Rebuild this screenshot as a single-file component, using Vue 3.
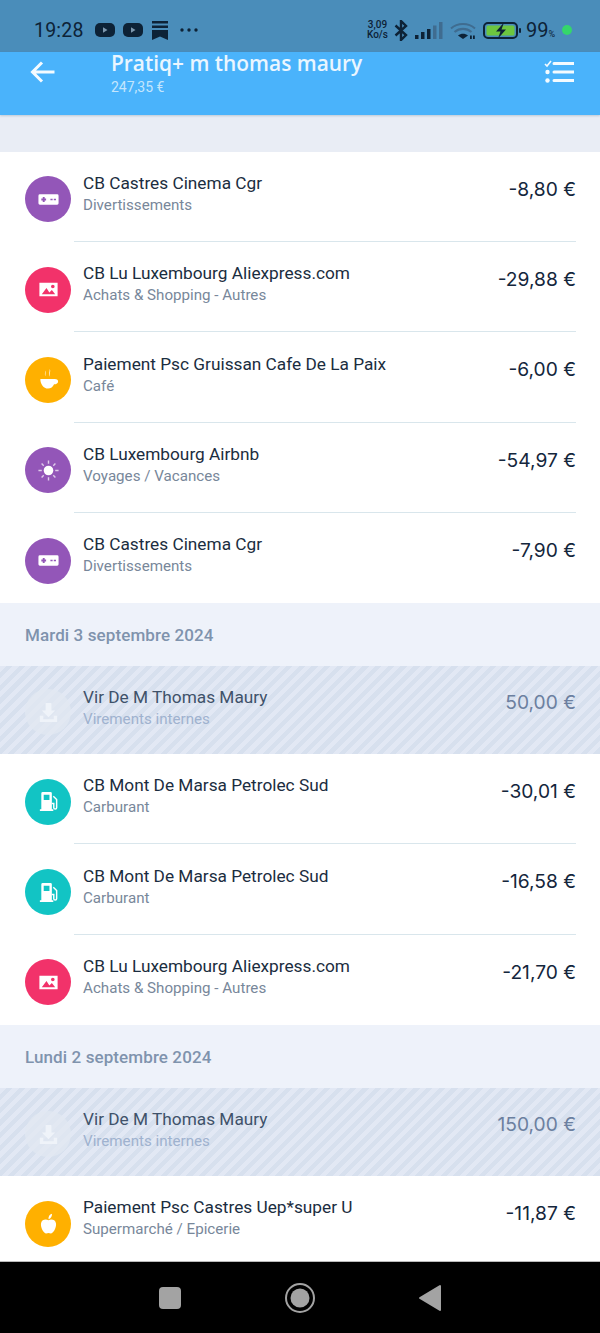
<script setup>
const icons = {
  game: '#9356b8',
  image: '#f2326a',
  cup: '#ffb000',
  sun: '#9356b8',
  fuel: '#12c4c4',
  apple: '#ffb000',
}
const sections = [
  { rows: [
    { t: 'CB Castres Cinema Cgr', s: 'Divertissements', a: '-8,80 €', i: 'game' },
    { t: 'CB Lu Luxembourg Aliexpress.com', s: 'Achats & Shopping - Autres', a: '-29,88 €', i: 'image' },
    { t: 'Paiement Psc Gruissan Cafe De La Paix', s: 'Café', a: '-6,00 €', i: 'cup' },
    { t: 'CB Luxembourg Airbnb', s: 'Voyages / Vacances', a: '-54,97 €', i: 'sun' },
    { t: 'CB Castres Cinema Cgr', s: 'Divertissements', a: '-7,90 €', i: 'game' },
  ] },
  { date: 'Mardi 3 septembre 2024', rows: [
    { t: 'Vir De M Thomas Maury', s: 'Virements internes', a: '50,00 €', i: 'down', internal: true },
    { t: 'CB Mont De Marsa Petrolec Sud', s: 'Carburant', a: '-30,01 €', i: 'fuel' },
    { t: 'CB Mont De Marsa Petrolec Sud', s: 'Carburant', a: '-16,58 €', i: 'fuel' },
    { t: 'CB Lu Luxembourg Aliexpress.com', s: 'Achats & Shopping - Autres', a: '-21,70 €', i: 'image' },
  ] },
  { date: 'Lundi 2 septembre 2024', rows: [
    { t: 'Vir De M Thomas Maury', s: 'Virements internes', a: '150,00 €', i: 'down', internal: true },
    { t: 'Paiement Psc Castres Uep*super U', s: 'Supermarché / Epicerie', a: '-11,87 €', i: 'apple' },
  ] },
]
</script>

<template>
  <div class="screen">
    <div class="status">
      <span class="clock">19:28</span>
      <div class="status-left">
        <svg width="20" height="14" viewBox="0 0 20 14"><rect width="20" height="14" rx="5" fill="#0d2236"/><path d="M8 4.300v5.400l4.500-2.700z" fill="#7d97ad"/></svg>
        <svg width="20" height="14" viewBox="0 0 20 14"><rect width="20" height="14" rx="5" fill="#0d2236"/><path d="M8 4.300v5.400l4.500-2.700z" fill="#7d97ad"/></svg>
        <svg width="18" height="19" viewBox="0 0 18 19"><path d="M1 0h16v2.600H1zM1 4.500h16v2.500H1zM1 9h16v10l-8-3.600L1 19z" fill="#0d2236"/></svg>
        <svg class="more" width="18" height="4" viewBox="0 0 18 4"><circle cx="2" cy="2" r="1.700" fill="#0d2236"/><circle cx="9" cy="2" r="1.700" fill="#0d2236"/><circle cx="16" cy="2" r="1.700" fill="#0d2236"/></svg>
      </div>
      <div class="status-right">
        <span class="speed">3,09<br>Ko/s</span>
        <svg class="bt" width="14" height="21" viewBox="0 0 14 21"><path d="M1.500 5.500l10.500 9.500-5 5V1l5 5-10.500 9.500" fill="none" stroke="#0d2236" stroke-width="2.400"/></svg>
        <svg class="signal" width="28" height="17" viewBox="0 0 28 17"><rect x="0" y="13" width="3.500" height="4" fill="#0d2236"/><rect x="6" y="10" width="3.500" height="7" fill="#0d2236"/><rect x="12" y="7" width="3.500" height="10" fill="#0d2236"/><rect x="18" y="3.500" width="3.500" height="13.500" fill="#3f6c90"/><rect x="24" y="0" width="3.500" height="17" fill="#3f6c90"/></svg>
        <svg class="wifi" width="26" height="17" viewBox="0 0 26 17"><path d="M1 6.500C7.500.6 18.500.6 25 6.500" fill="none" stroke="#3f6c90" stroke-width="2"/><path d="M4.500 10c5-4.300 12-4.300 17 0" fill="none" stroke="#3f6c90" stroke-width="2.200"/><path d="M8 13.500c3-2.300 7-2.300 10 0l-5 3.500z" fill="#0d2236"/><rect x="20" y="13.500" width="1.800" height="3.500" fill="#0d2236"/><rect x="23" y="13.500" width="1.800" height="3.500" fill="#0d2236"/></svg>
        <svg class="batt" width="38" height="17" viewBox="0 0 38 17"><rect x="1" y="1" width="33" height="15" rx="4" fill="none" stroke="#0d2236" stroke-width="2"/><rect x="3.500" y="3.500" width="28" height="10" rx="1.500" fill="#6cc63f"/><path d="M21 .5l-8 9h4.500l-2.500 7 8-9h-4.500z" fill="#0d2236"/><rect x="36" y="6" width="2" height="5" rx="1" fill="#0d2236"/></svg>
        <span class="battery">99<small>%</small></span>
        <i class="dot"></i>
      </div>
    </div>

    <header class="bar">
      <svg class="back" width="26" height="24" viewBox="0 0 26 24"><path d="M24.500 12H2.500M12 2.500L2.500 12l9.500 9.500" fill="none" stroke="#f4fbff" stroke-width="3"/></svg>
      <div class="bar-text">
        <div class="bar-title">Pratiq+ m thomas maury</div>
        <div class="bar-sub">247,35 €</div>
      </div>
      <svg class="menu" width="30" height="24" viewBox="0 0 30 24"><path d="M1 4l2 2 4-5" fill="none" stroke="#f4fbff" stroke-width="1.600"/><path d="M10 3.500h19.500M10 12h19.500M10 20.500h19.500" stroke="#f4fbff" stroke-width="3" stroke-linecap="round"/><circle cx="3.500" cy="12" r="2.200" fill="#f4fbff"/><circle cx="3.500" cy="20.500" r="2.200" fill="#f4fbff"/></svg>
    </header>

    <div class="spacer"></div>

    <section v-for="(sec, si) in sections" :key="si">
      <div v-if="sec.date" class="date">{{ sec.date }}</div>
      <div
        v-for="(r, ri) in sec.rows"
        :key="ri"
        class="row"
        :class="{ internal: r.internal }"
      >
        <div class="avatar" :style="r.internal ? null : { background: icons[r.i] }">
          <svg width="23" height="23" viewBox="0 0 24 24" fill="currentColor">
            <template v-if="r.i === 'game'">
              <path fill-rule="evenodd" d="M3 6.500h18a1.500 1.500 0 0 1 1.500 1.500v8a1.500 1.500 0 0 1-1.500 1.500H3A1.500 1.500 0 0 1 1.500 16V8A1.500 1.500 0 0 1 3 6.500zM6 9.500v1.500H4.500v2H6v1.500h2V13h1.500v-2H8V9.500zM14 11.300v1.600h2.300v-1.600zM17.500 11.300v1.600h2.300v-1.600z" />
            </template>
            <template v-else-if="r.i === 'image'">
              <path fill-rule="evenodd" d="M2.500 5h19v14h-19zM5 17h14l-3.500-4.500-2.600 2.500-3-4.500zM16.500 7a1.900 1.900 0 1 0 0 3.800 1.900 1.900 0 0 0 0-3.800z" />
            </template>
            <template v-else-if="r.i === 'cup'">
              <path d="M3.500 11.500h15c2.700 0 3.500 1.300 3.500 2.500 0 1.900-1.700 2.900-4.200 3-1.200 2.700-3.400 4.500-6.300 4.500-4.600 0-8-4.500-8-10zM8.500 2.500c1.700 1.800-.7 3.200.8 6-2.300-2.200 0-3.900-.8-6zM13 1c2.300 2.500-1.200 4.500.8 8-2.900-2.600.2-5.200-.8-8z"/>
            </template>
            <template v-else-if="r.i === 'sun'">
              <circle cx="12" cy="12" r="5"/>
              <path d="M12 1.500V5M12 19v3.500M1.500 12H5M19 12h3.500M4.800 4.800L7 7M17 17l2.200 2.200M4.800 19.200L7 17M17 7l2.200-2.200" stroke="currentColor" stroke-opacity=".7" stroke-width="1.500"/>
            </template>
            <template v-else-if="r.i === 'fuel'">
              <path fill-rule="evenodd" d="M4.500 3.500A1.500 1.500 0 0 1 6 2h8a1.500 1.500 0 0 1 1.500 1.500V20h-11zM7 5v5.500h6V5zM3 20h14v2H3z"/>
              <path d="M17 6.500l3.500 3.500v8.500c0 1.700-3 1.700-3 0V14H15.500" fill="none" stroke="currentColor" stroke-width="1.500"/>
            </template>
            <template v-else-if="r.i === 'down'">
              <path d="M9 2h6v8h4l-7 7-7-7h4zM3 15.500h3.500v3.500h11v-3.500H21V22H3z"/>
            </template>
            <template v-else>
              <path d="M12 8.500c2-1.300 7-1.500 7.800 3.300.8 5-3.200 10.700-5.300 10.700-1 0-1.700-.5-2.500-.5s-1.500.5-2.500.5c-2.100 0-6.100-5.700-5.300-10.700C5 7 10 7.200 12 8.500zM12 7.500c-.2-2.800.8-5 3.700-5.800-.1 3-1.200 5-3.700 5.800z"/>
            </template>
          </svg>
        </div>
        <div class="content">
          <div class="text">
            <div class="title">{{ r.t }}</div>
            <div class="sub">{{ r.s }}</div>
          </div>
          <div class="amount">{{ r.a }}</div>
        </div>
      </div>
    </section>

    <nav class="nav">
      <svg width="24" height="24" viewBox="0 0 24 24"><rect x="1" y="1" width="22" height="22" rx="4" fill="#a3a3a3"/></svg>
      <svg width="32" height="32" viewBox="0 0 32 32"><circle cx="16" cy="16" r="14" fill="none" stroke="#a3a3a3" stroke-width="2"/><circle cx="16" cy="16" r="9.500" fill="#a3a3a3"/></svg>
      <svg width="24" height="28" viewBox="0 0 24 28"><path d="M22 2v24L2 14z" fill="#a3a3a3" stroke="#a3a3a3" stroke-width="2" stroke-linejoin="round"/></svg>
    </nav>
  </div>
</template>

<style>
html, body { margin: 0; background: #fff; }
</style>

<style scoped>
.screen {
  width: 600px;
  height: 1333px;
  overflow: hidden;
  position: relative;
  font-family: Roboto, "Liberation Sans", sans-serif;
  background: #fff;
}
.status {
  height: 52px;
  background: #4a8dba;
  display: flex;
  align-items: center;
  padding: 8px 28px 0 34px;
  box-sizing: border-box;
  color: #0d2236;
}
.clock { font-size: 19.500px; letter-spacing: 0.2px; margin-right: 11px; }
.status-left { display: flex; align-items: center; gap: 8px; }
.more { margin-left: 3px; }
.status-right { margin-left: auto; display: flex; align-items: center; gap: 5px; }
.speed { font-size: 10px; line-height: 10px; font-weight: 500; text-align: center; margin-right: 1px; }
.signal { margin-left: 2px; }
.wifi { margin-left: 2px; margin-right: 2px; }
.battery { font-size: 20px; }
.battery small { font-size: 9px; }
.dot { width: 10px; height: 10px; border-radius: 50%; background: #35d66b; margin-left: 2px; }

.bar {
  height: 63px;
  background: #4ab3fb;
  display: flex;
  align-items: flex-start;
  box-sizing: border-box;
  padding-left: 30px;
  position: relative;
  box-shadow: 0 1px 2px rgba(60, 90, 120, .25);
}
.back { margin-top: 8px; flex: none; }
.bar-text { margin-left: 55px; margin-top: -1px; }
.bar-title {
  font-family: "Open Sans", sans-serif;
  font-size: 20.900px;
  font-weight: 600;
  line-height: 24px;
  color: #eaf6ff;
}
.bar-sub { font-size: 14px; line-height: 16px; margin-top: 4px; color: #c4e6fd; }
.menu { position: absolute; right: 26px; top: 8px; }

.spacer { height: 36.700px; background: #e9edf5; }

.date {
  height: 63px;
  background: #eef2fa;
  display: flex;
  align-items: center;
  box-sizing: border-box;
  padding: 1px 0 0 25px;
  font-size: 17px;
  font-weight: 500;
  color: #7f93ad;
  letter-spacing: .1px;
}

.row {
  height: 90.300px;
  display: flex;
  align-items: center;
  box-sizing: border-box;
  padding-left: 25px;
  background: #fff;
}
.avatar {
  width: 46px;
  height: 46px;
  margin-top: 5px;
  flex: none;
  border-radius: 50%;
  color: #fff;
  display: flex;
  align-items: center;
  justify-content: center;
}
.content {
  flex: 1;
  height: 100%;
  margin-left: 3px;
  margin-right: 24px;
  padding-left: 9px;
  display: flex;
  justify-content: space-between;
  border-bottom: 1px solid #d9e6ec;
  box-sizing: border-box;
}
.row:last-child .content,
.internal .content { border-bottom: 0; }
.text { padding-top: 20.300px; }
.title { font-size: 17.250px; line-height: 22px; color: #1b2d40; white-space: nowrap; }
.sub { font-size: 15.150px; line-height: 20px; margin-top: 1px; color: #78879a; white-space: nowrap; }
.amount {
  padding-top: 25px;
  font-family: Inter, sans-serif;
  font-size: 19.200px;
  line-height: 24px;
  color: #14263c;
  white-space: nowrap;
}
.internal {
  height: 88px;
  background-color: #dfe6f3;
  background-image: repeating-linear-gradient(135deg, #e2e8f4 0 4.500px, #d7e0ee 4.500px 9px);
}
.internal .text { padding-top: 19.500px; }
.internal .amount { padding-top: 24px; }
.internal .avatar { margin-top: 4px; background: rgba(226, 232, 241, .75); color: #eff3f9; }
.internal .title { color: #3f526a; }
.internal .sub { color: #9fb2cf; }
.internal .amount { color: #6c80a0; }

.nav {
  position: absolute;
  left: 0;
  right: 0;
  bottom: 0;
  height: 72px;
  background: #000;
  display: flex;
  align-items: center;
  justify-content: center;
  gap: 102px;
  padding-top: 1px;
  box-sizing: border-box;
  border-top: 1px solid #bbb;
}
</style>
